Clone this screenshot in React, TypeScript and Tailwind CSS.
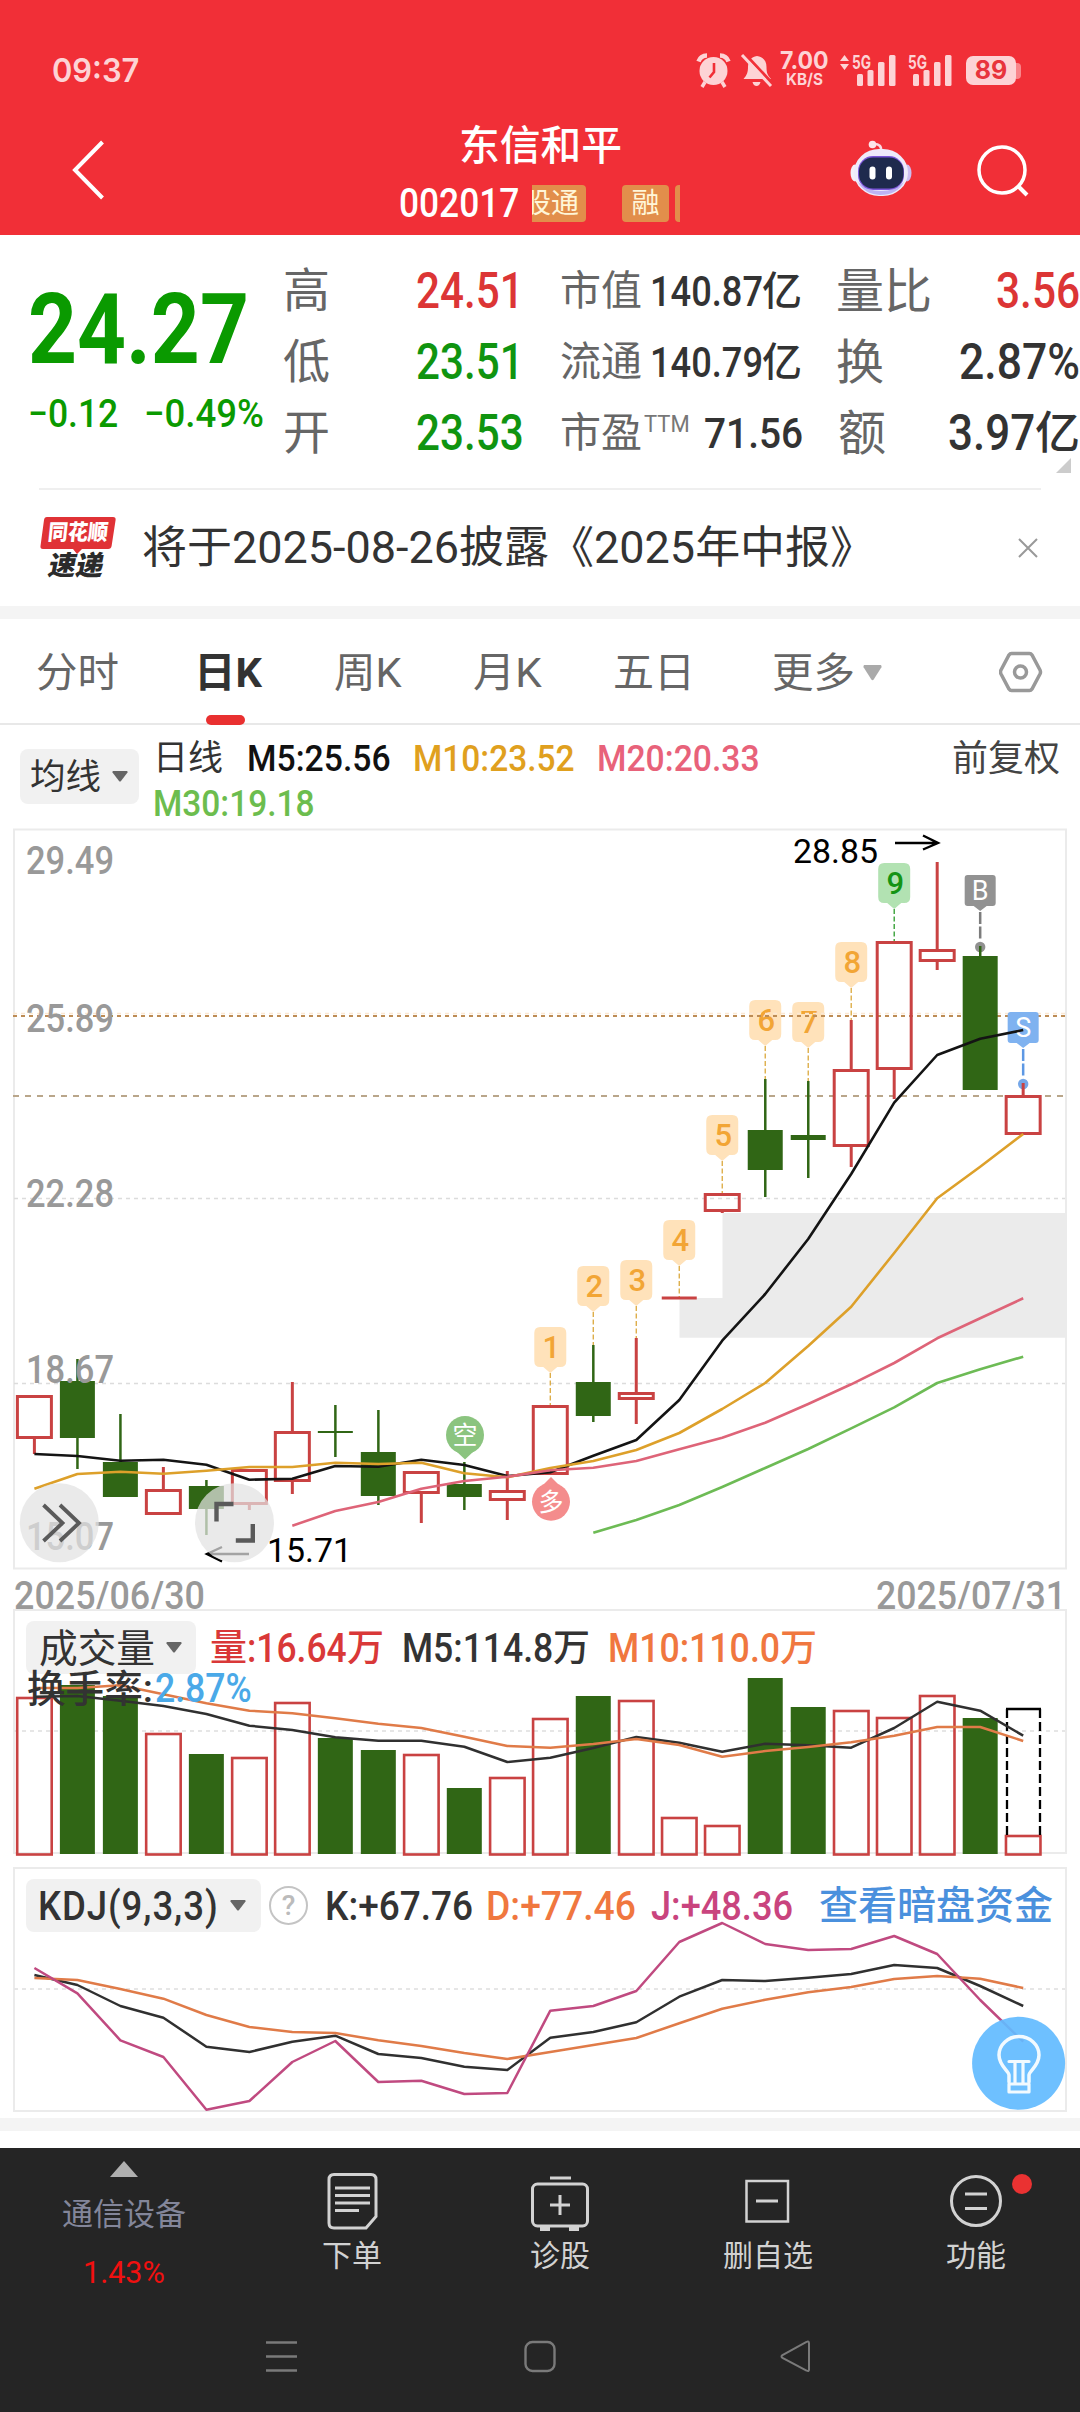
import { useLayoutEffect, useRef, type ReactNode } from "react";

/** One line of text, squeezed or stretched horizontally to the width of its box. */
function Fit({ className, children }: { className: string; children: ReactNode }) {
  const box = useRef<HTMLSpanElement>(null);
  const text = useRef<HTMLSpanElement>(null);
  useLayoutEffect(() => {
    if (!box.current || !text.current) return;
    text.current.style.transform = "none";
    const k = box.current.clientWidth / text.current.offsetWidth;
    text.current.style.transform = `scaleX(${k})`;
  });
  return (
    <span ref={box} className={"block shrink-0 overflow-visible whitespace-nowrap " + className}>
      <span ref={text} className="inline-block origin-left">{children}</span>
    </span>
  );
}

/* ---------- data ---------- */

const cx = (i: number) => 34.4 + i * 42.99;
const pts = (ys: number[], from = 0) => ys.map((y, k) => `${cx(from + k).toFixed(1)},${y}`).join(" ");

type Candle = { up: boolean; t: number; b: number; h?: number; l?: number };
const candles: Candle[] = [
  { up: true, t: 1395, b: 1439, l: 1454 },
  { up: false, t: 1381, b: 1438, h: 1359, l: 1469 },
  { up: false, t: 1462, b: 1497, h: 1414 },
  { up: true, t: 1489, b: 1515, h: 1467 },
  { up: false, t: 1486, b: 1509, h: 1480, l: 1535 },
  { up: true, t: 1469, b: 1505, l: 1510 },
  { up: true, t: 1431, b: 1482, h: 1382, l: 1494 },
  { up: false, t: 1431, b: 1433, h: 1405, l: 1457 },
  { up: false, t: 1452, b: 1496, h: 1410, l: 1505 },
  { up: true, t: 1471, b: 1494, l: 1523 },
  { up: false, t: 1484, b: 1497, h: 1462, l: 1510 },
  { up: true, t: 1490, b: 1501, h: 1471, l: 1520 },
  { up: true, t: 1405, b: 1475 },
  { up: false, t: 1382, b: 1416, h: 1345, l: 1422 },
  { up: true, t: 1392, b: 1400, h: 1338, l: 1424 },
  { up: true, t: 1296.5, b: 1299.5 },
  { up: true, t: 1193, b: 1212, l: 1213 },
  { up: false, t: 1130, b: 1170, h: 1079, l: 1197 },
  { up: false, t: 1135, b: 1140, h: 1081, l: 1178 },
  { up: true, t: 1069, b: 1147, h: 1020, l: 1167 },
  { up: true, t: 941, b: 1070, l: 1099 },
  { up: true, t: 949, b: 962, h: 862, l: 970 },
  { up: false, t: 956, b: 1090, h: 946 },
  { up: true, t: 1095, b: 1135, h: 1083 },
];

const ma5 = [1454, 1456, 1460.7, 1459.7, 1464.7, 1479.7, 1478.7, 1466, 1466.7, 1459.7, 1465, 1476, 1472.3, 1455.7, 1440, 1400, 1340.7, 1294, 1239, 1174, 1102.7, 1055, 1038.7, 1030];
const ma10 = [1488.7, 1474, 1471.7, 1473.7, 1470.7, 1467, 1467, 1462.7, 1464, 1462.7, 1473.3, 1477.3, 1468, 1461, 1450, 1433, 1409, 1383, 1346, 1306.7, 1253, 1198.3, 1166.7, 1134];
const ma20 = [1525.7, 1511, 1502, 1488.7, 1481, 1476.7, 1470.3, 1467.7, 1461, 1449.3, 1437.7, 1422.7, 1404, 1384.3, 1363, 1338.3, 1318.3, 1298.3];
const ma30 = [1532.7, 1520, 1505, 1487, 1468, 1449, 1428.3, 1407.3, 1383, 1369.3, 1356.7];

const volTop = [1697, 1685, 1696, 1733, 1754, 1757, 1702, 1738, 1750, 1754, 1788, 1777, 1718, 1696, 1700, 1817, 1825, 1678, 1707, 1710, 1717, 1695, 1718, 1835];
const vol5 = [1696.7, 1696, 1700.7, 1706, 1714, 1725.7, 1730, 1737.3, 1740.7, 1740.7, 1746.7, 1762, 1757.7, 1748, 1737, 1742.7, 1751.7, 1743.7, 1745.3, 1747.7, 1728, 1701.7, 1710.7, 1735.7];
const vol10 = [1688, 1688, 1685.3, 1694.3, 1703.3, 1710.7, 1713.3, 1718.3, 1723.7, 1728, 1736.7, 1746, 1747.7, 1744, 1739, 1745, 1756.7, 1751, 1747, 1742.3, 1735.7, 1727, 1727, 1741];

const kLine = [1975, 1985, 2006, 2017.7, 2046.7, 2052, 2041.7, 2035.7, 2054, 2058, 2066.7, 2070, 2037.7, 2032, 2022.3, 1996.7, 1980, 1981, 1977.7, 1974, 1965, 1968, 1986, 2006];
const dLine = [1978, 1980, 1989, 1998.7, 2015, 2027, 2032, 2033, 2040.3, 2046, 2053, 2059, 2052, 2045, 2038, 2023.3, 2008.7, 1999.7, 1992.3, 1987, 1979, 1976, 1978.7, 1988];
const jLine = [1968, 1993.3, 2040.3, 2057, 2109.7, 2101, 2062, 2041, 2082, 2080.7, 2094, 2093, 2010.7, 2006, 1991, 1942, 1923, 1944, 1950, 1949, 1936, 1954, 2000, 2041.7];

const tags: [string, number, number][] = [
  ["1", 12, 1327],
  ["2", 13, 1266],
  ["3", 14, 1260],
  ["4", 15, 1220],
  ["5", 16, 1115],
  ["6", 17, 1000],
  ["7", 18, 1002],
  ["8", 19, 942],
  ["9", 20, 863],
];

const axis: [string, number][] = [
  ["29.49", 874],
  ["25.89", 1032],
  ["22.28", 1207],
  ["18.67", 1383],
  ["15.07", 1550],
];

const RED = "#c94242";
const GREEN = "#306615";

/* ---------- header ---------- */

function Signal() {
  return (
    <svg width="46" height="36" viewBox="0 0 46 36" fill="#fdd3d5">
      <text x="1" y="16.5" fontSize="19" fontWeight="700" textLength="19" lengthAdjust="spacingAndGlyphs">5G</text>
      <rect x="6" y="22" width="6" height="12" rx="1.5" />
      <rect x="16.5" y="18" width="6" height="16" rx="1.5" />
      <rect x="27" y="10" width="6.5" height="24" rx="1.5" />
      <rect x="38" y="3" width="6.5" height="31" rx="1.5" />
    </svg>
  );
}

function StatusBar() {
  return (
    <div className="flex h-[88px] items-end pl-[52px] font-['Inter','Roboto',sans-serif] text-[#fdd3d5]">
      <Fit className="mb-[-2px] w-[87px] text-[33px] leading-[40px] font-semibold">09:37</Fit>
      <svg className="ml-[557px]" width="35" height="36" viewBox="0 0 35 36">
        <circle cx="17.5" cy="19" r="14" fill="#fdd3d5" />
        <path d="M2.500 9.500A9 9 0 0 1 11 3.500M24 3.500a9 9 0 0 1 8.500 6" fill="none" stroke="#fdd3d5" strokeWidth="4.500" />
        <path d="M9 30l-3 5M26 30l3 5" stroke="#fdd3d5" strokeWidth="3.500" />
        <path d="M18 11v9l-4.500 5.500" fill="none" stroke="#f12f37" strokeWidth="2.600" />
      </svg>
      <svg className="ml-[9px]" width="34" height="36" viewBox="0 0 34 36">
        <path d="M17 4c6.500 1 9.500 5 9.500 11 0 6 1 8 4.500 12H3.500C7 23 8 20 8 15c0-6 3-10 9-11z" fill="#fdd3d5" />
        <path d="M12.500 30h8q-1 4-4 4t-4-4z" fill="#fdd3d5" />
        <path d="M3.500 0.500l29 31" stroke="#f12f37" strokeWidth="3" />
        <path d="M2 3l29 31" stroke="#fdd3d5" strokeWidth="3" />
      </svg>
      <div className="ml-[6px] flex h-[38px] flex-col items-center">
        <Fit className="w-[49px] text-[24px] leading-[21px] font-bold">7.00</Fit>
        <Fit className="w-[37px] text-[16.5px] leading-[16px] font-bold">KB/S</Fit>
      </div>
      <svg className="ml-[10px]" width="11" height="36" viewBox="0 0 11 36" fill="#fdd3d5">
        <path d="M1 9l4.500-6L10 9zM1 12l4.500 6L10 12z" />
      </svg>
      <span className="ml-px"><Signal /></span>
      <span className="ml-[10px]"><Signal /></span>
      <div className="mb-[3px] ml-[13px] flex items-center">
        <div className="flex h-[29px] w-[50px] items-center justify-center rounded-[7px] bg-[#fdd3d5] text-[25px] leading-none font-bold text-[#e8343c]">89</div>
        <div className="h-[16px] w-[5px] rounded-r-[4px] bg-[#f9868b]" />
      </div>
    </div>
  );
}

function Robot() {
  return (
    <svg width="62" height="58" viewBox="0 0 62 58">
      <path d="M31 11q1-7-7-7" fill="none" stroke="#fbd9e2" strokeWidth="2.500" />
      <circle cx="22.500" cy="4.500" r="3.800" fill="#fde6ea" />
      <ellipse cx="5" cy="33" rx="4.500" ry="8.500" fill="#f3eef9" />
      <ellipse cx="57" cy="33" rx="4.500" ry="8.500" fill="#cdbdf0" />
      <rect x="4" y="9" width="54" height="47" rx="25" fill="#eeeafa" />
      <path d="M8 42q6 12 22 13 17 0 24-13-9 9-23 9T8 42z" fill="#bdb3f4" />
      <rect x="8" y="16" width="46" height="34" rx="15" fill="#7a55d8" />
      <rect x="9" y="17.500" width="44.500" height="31" rx="14" fill="#1e2a4d" />
      <rect x="19.500" y="26.500" width="6" height="13" rx="3" fill="#fff" />
      <rect x="36" y="26.500" width="6" height="13" rx="3" fill="#fff" />
    </svg>
  );
}

function Header() {
  return (
    <header className="h-[235px] bg-[#f12f37] text-white">
      <StatusBar />
      <div className="flex h-[147px]">
        <svg className="mt-[50px] ml-[70px]" width="36" height="64" viewBox="0 0 36 64">
          <path d="M32.500 4L5 32l27.500 28" fill="none" stroke="#fff" strokeWidth="4" />
        </svg>
        <div className="ml-[292px] flex w-[284px] flex-col items-center">
          <Fit className="mt-[34px] w-[163px] text-[41px] leading-[48px] font-medium">东信和平</Fit>
          <div className="mt-[14px] flex h-[38px] w-full items-center">
            <Fit className="mt-px ml-px w-[120px] text-[40px] leading-[38px] font-medium">002017</Fit>
            <div className="ml-[13px] flex h-[37px] w-[148px] shrink-0 justify-end gap-[6px] overflow-hidden text-[28px] leading-[35px] text-[#fff6d8]">
              <div className="mr-[30px] flex w-[70px] shrink-0 items-center justify-center rounded-[4px] bg-[#e28e4b]">股通</div>
              <div className="flex w-[47px] shrink-0 items-center justify-center rounded-[4px] bg-[#e28e4b]">融</div>
              <div className="w-[5px] shrink-0 rounded-l-[4px] bg-[#e28e4b]" />
            </div>
          </div>
        </div>
        <div className="mt-[52px] ml-[168px]"><Robot /></div>
        <svg className="mt-[54px] ml-[64px]" width="56" height="58" viewBox="0 0 56 58">
          <circle cx="26" cy="28" r="23" fill="none" stroke="#fff" strokeWidth="3.500" />
          <path d="M42 44l9 9" stroke="#fff" strokeWidth="4" />
        </svg>
      </div>
    </header>
  );
}

/* ---------- quote ---------- */

function Yi({ size }: { size: "s" | "l" }) {
  return size === "s" ? <span className="-ml-px w-[41px] text-[40px] font-medium">亿</span> : <span className="w-[45px] text-[45px] font-medium">亿</span>;
}

function Quote() {
  const big = "text-[50px] leading-[71px] font-medium";
  return (
    <section className="flex h-[253px] bg-white">
      <div className="ml-[28px] w-[255px] text-[#0a9a00]">
        <Fit className="mt-[45px] w-[221px] text-[99px] leading-[98px] font-bold">24.27</Fit>
        <div className="mt-[16px] flex gap-[26px] text-[39px] leading-[40px] font-medium">
          <Fit className="w-[90px]">−0.12</Fit>
          <Fit className="w-[120px]">−0.49%</Fit>
        </div>
      </div>
      <div className="relative mt-[21px] grow text-[#333]">
        <div className="flex h-[71px] items-center">
          <span className="w-[133px] text-[47px] text-[#666]">高</span>
          <Fit className={"w-[108px] text-[#dc3535] " + big}>24.51</Fit>
          <span className="ml-[36px] w-[90px] text-[41px] text-[#666]">市值</span>
          <Fit className="w-[113px] text-[42px] font-medium">140.87</Fit>
          <Yi size="s" />
          <span className="ml-[33px] text-[48px] text-[#666]">量比</span>
          <span className="grow" />
          <Fit className={"w-[84px] text-[#dc3535] " + big}>3.56</Fit>
        </div>
        <div className="flex h-[71px] items-center">
          <span className="w-[133px] text-[47px] text-[#666]">低</span>
          <Fit className={"w-[108px] text-[#109410] " + big}>23.51</Fit>
          <span className="ml-[36px] w-[90px] text-[41px] text-[#666]">流通</span>
          <Fit className="w-[113px] text-[42px] font-medium">140.79</Fit>
          <Yi size="s" />
          <span className="ml-[33px] text-[48px] text-[#666]">换</span>
          <span className="grow" />
          <Fit className={"w-[121px] " + big}>2.87%</Fit>
        </div>
        <div className="flex h-[71px] items-center">
          <span className="w-[133px] text-[47px] text-[#666]">开</span>
          <Fit className={"w-[108px] text-[#109410] " + big}>23.53</Fit>
          <span className="ml-[36px] text-[41px] text-[#666]">市盈</span>
          <Fit className="mt-[-16px] ml-[2px] w-[46px] text-[23px] text-[#777]">TTM</Fit>
          <Fit className="ml-[14px] w-[99px] text-[42px] font-medium">71.56</Fit>
          <span className="ml-[35px] text-[48px] text-[#666]">额</span>
          <span className="grow" />
          <Fit className={"w-[87px] " + big}>3.97</Fit>
          <Yi size="l" />
        </div>
        <svg className="absolute top-[202px] right-[9px]" width="15" height="15"><path d="M15 0v15H0z" fill="#ccc" /></svg>
      </div>
    </section>
  );
}

function News() {
  return (
    <section className="bg-white">
      <div className="mx-[39px] flex h-[118px] items-center border-t-2 border-[#efefef]">
        <div className="relative flex h-[64px] w-[77px] flex-col items-center">
          <svg className="absolute inset-0" width="77" height="64" viewBox="0 0 77 64">
            <path d="M8 1h66q3 0 2.600 3l-4 26q-.5 3-3.500 3H43l-5 5-4-5H4q-3 0-2.500-3L5 4q.4-3 3-3z" fill="#e03236" />
          </svg>
          <Fit className="relative mt-[3px] w-[60px] -skew-x-6 text-[22px] leading-[27px] font-black text-white">同花顺</Fit>
          <Fit className="relative mt-[7px] mr-[2px] w-[55px] -skew-x-12 text-[27px] leading-[26px] font-black text-[#2b2b2b]">速递</Fit>
        </div>
        <Fit className="ml-[26px] w-[733px] text-[44px] leading-[60px] text-[#333]">将于2025-08-26披露《2025年中报》</Fit>
        <svg className="ml-auto mr-[3px]" width="20" height="20"><path d="M1 1l18 18M19 1L1 19" stroke="#999" strokeWidth="2" /></svg>
      </div>
      <div className="h-[13px] bg-[#f4f4f4]" />
    </section>
  );
}

/* ---------- tabs and averages ---------- */

function Down({ className, w = 16, h = 11, fill = "#666" }: { className?: string; w?: number; h?: number; fill?: string }) {
  return (
    <svg className={"shrink-0 " + (className ?? "")} width={w} height={h} viewBox="0 0 16 11" preserveAspectRatio="none">
      <path d="M1 0h14q1 .5.500 1.500L9 10q-1 1-2 0L.5 1.500Q0 .5 1 0z" fill={fill} />
    </svg>
  );
}

function Tabs() {
  return (
    <nav className="flex h-[106px] items-center border-b-2 border-[#e8e8e8] bg-white pt-[3px] pl-[36px] text-[41px] leading-[60px] text-[#666]">
      <Fit className="w-[83px]">分时</Fit>
      <div className="relative ml-[75px]">
        <Fit className="w-[68px] font-bold text-[#333]">日K</Fit>
        <div className="absolute top-[72px] left-[12px] h-[10px] w-[39px] rounded-[5px] bg-[#e93030]" />
      </div>
      <Fit className="ml-[72px] w-[68px]">周K</Fit>
      <Fit className="ml-[71px] w-[69px]">月K</Fit>
      <Fit className="ml-[71px] w-[82px]">五日</Fit>
      <Fit className="ml-[77px] w-[83px]">更多</Fit>
      <Down className="ml-[8px]" w={19} h={16} fill="#aaa" />
      <svg className="mt-[-2px] ml-[117px]" width="44" height="42" viewBox="0 0 44 42" fill="none" stroke="#999" strokeWidth="3.500">
        <path d="M12.500 2.500h18q1.500 0 2.500 1.500l8 15q1 2 0 4l-8 15q-1 1.500-2.500 1.500h-18q-1.500 0-2.500-1.500l-8-15q-1-2 0-4l8-15q1-1.500 2.500-1.500z" />
        <circle cx="21.500" cy="21" r="6" />
      </svg>
    </nav>
  );
}

function Averages() {
  return (
    <section className="flex h-[103px] bg-white pl-[20px] text-[37px] font-medium">
      <div className="mt-[24px] flex h-[55px] w-[119px] items-center rounded-[8px] bg-[#f1f1f1] pl-[10px] font-normal text-[#333]">
        <Fit className="mt-[4px] w-[71px] text-[35px]">均线</Fit>
        <Down className="ml-[11px]" />
      </div>
      <div className="ml-[14px] w-[780px] leading-[45px]">
        <div className="mt-[11px] flex">
          <Fit className="w-[70px] text-[35px] font-normal text-[#333]">日线</Fit>
          <Fit className="ml-[24px] w-[144px] text-[#111]">M5:25.56</Fit>
          <Fit className="ml-[22px] w-[162px] text-[#e0a01e]">M10:23.52</Fit>
          <Fit className="ml-[22px] w-[163px] text-[#e8627a]">M20:20.33</Fit>
        </div>
        <Fit className="w-[162px] text-[#6cbd4e]">M30:19.18</Fit>
      </div>
      <Fit className="mt-[12px] ml-[19px] w-[108px] text-[36px] leading-[45px] font-normal text-[#444]">前复权</Fit>
    </section>
  );
}

/* ---------- charts ---------- */

function Tag({ label, i, top }: { label: string; i: number; top: number }) {
  const x = cx(i);
  const nine = label === "9";
  return (
    <g>
      <path
        d={`M${x - 10} ${top}h20q6 0 6 6v28q0 6-6 6h-3l-7 6-7-6h-3q-6 0-6-6v-28q0-6 6-6z`}
        fill={nine ? "#b2e2b2" : "#ffe2ba"}
      />
      <line x1={x} x2={x} y1={top + 46} y2={top + 79} stroke={nine ? "#2a9a2a" : "#dba83c"} strokeWidth="1.300" strokeDasharray="5 2.500" />
      <text x={x + 1} y={top + 30.500} fontSize="31" fontWeight="500" textAnchor="middle" fill={nine ? "#149414" : "#f2a535"}>{label}</text>
    </g>
  );
}

function Flag({ label, i, top, fill, line }: { label: string; i: number; top: number; fill: string; line: string }) {
  const x = cx(i);
  return (
    <g>
      <path d={`M${x - 12.500} ${top}h25q3 0 3 3v25q0 3-3 3h-6l-6.500 5-6.500-5h-6q-3 0-3-3v-25q0-3 3-3z`} fill={fill} />
      <line x1={x} x2={x} y1={top + 37} y2={top + 65} stroke={line} strokeWidth="2.500" strokeDasharray="12 2.500" />
      <circle cx={x} cy={top + 72} r="5.200" fill={line} opacity=".85" />
      <text x={x} y={top + 25} fontSize="27" textAnchor="middle" fill="#fff">{label}</text>
    </g>
  );
}

function CandleChart() {
  return (
    <svg className="relative block overflow-visible" width="1080" height="781" viewBox="0 828 1080 781">
      <rect x="14" y="829.500" width="1052" height="739" fill="none" stroke="#ebebeb" strokeWidth="2" />
      <path d="M722.500 1213H1065v124.700H679.500V1298h43z" fill="#ebebeb" />
      <g stroke="#dcdcdc" strokeWidth="1.300" strokeDasharray="4 4">
        <line x1="14" x2="1065" y1="1198.500" y2="1198.500" />
        <line x1="14" x2="1065" y1="1383.500" y2="1383.500" />
      </g>
      {tags.map(([label, i, top]) => <Tag key={label} label={label} i={i} top={top} />)}
      <line x1="13" x2="1065" y1="1013.500" y2="1013.500" stroke="#fbe8d2" strokeWidth="1.500" strokeDasharray="4 4" />
      <line x1="13" x2="1065" y1="1016" y2="1016" stroke="#bd8c55" strokeWidth="2" strokeDasharray="4 4" />
      <line x1="13" x2="1065" y1="1096" y2="1096" stroke="#b9a68a" strokeWidth="2" strokeDasharray="6 6" />
      <Flag label="B" i={22} top={875} fill="#929292" line="#7c7c7c" />
      <Flag label="S" i={23} top={1012} fill="#7fb2f0" line="#5d98e4" />

      {candles.map((c, i) => {
        const x = cx(i);
        if (c.up) {
          return (
            <g key={i} stroke={RED} strokeWidth="3" fill="none">
              {c.h && <line x1={x} x2={x} y1={c.h} y2={c.t} />}
              {c.l && <line x1={x} x2={x} y1={c.b} y2={c.l} />}
              {c.b - c.t < 4
                ? <line x1={x - 17.500} x2={x + 17.500} y1={(c.t + c.b) / 2} y2={(c.t + c.b) / 2} />
                : <rect x={x - 17} y={c.t + 1.500} width="34" height={c.b - c.t - 3} />}
            </g>
          );
        }
        return (
          <g key={i} fill={GREEN}>
            <rect x={x - 1.200} y={c.h ?? c.t} width="2.500" height={(c.l ?? c.b) - (c.h ?? c.t)} />
            <rect x={x - 17.500} y={c.t} width="35" height={c.b - c.t} />
          </g>
        );
      })}

      <g fill="none" strokeWidth="2.600" strokeLinejoin="round">
        <polyline points={pts(ma5)} stroke="#141414" />
        <polyline points={pts(ma10)} stroke="#dda02a" />
        <polyline points={pts(ma20, 6)} stroke="#de6478" />
        <polyline points={pts(ma30, 13)} stroke="#6dbb55" />
      </g>

      {axis.map(([t, y]) => (
        <text key={t} x="26" y={y} fontSize="39.500" fontWeight="500" fill="#999" textLength="88" lengthAdjust="spacingAndGlyphs">{t}</text>
      ))}

      <path d="M456 1451l9 8.500 9-8.500z" fill="#8bc47f" />
      <circle cx="465" cy="1435" r="19" fill="#8bc47f" />
      <text x="465" y="1444" fontSize="25" textAnchor="middle" fill="#fff">空</text>
      <path d="M542 1486l9-9 9 9z" fill="#f48c8c" />
      <circle cx="551" cy="1501.700" r="19" fill="#f48c8c" />
      <text x="551" y="1511" fontSize="25" textAnchor="middle" fill="#fff">多</text>

      <g fill="none" stroke="#000" strokeWidth="2.400">
        <path d="M895 843h42M923 835.500l15 7.500-15 6.500" />
        <path d="M249 1554h-42M222 1547l-15 7 15 7.500" />
      </g>
      <text x="793" y="863" fontSize="34" textLength="85" lengthAdjust="spacingAndGlyphs">28.85</text>
      <text x="267" y="1561.500" fontSize="34" textLength="85" lengthAdjust="spacingAndGlyphs">15.71</text>

      <circle cx="59.300" cy="1522.700" r="39.500" fill="#e2e2e2" fillOpacity=".72" />
      <circle cx="234.500" cy="1522.700" r="39.500" fill="#e2e2e2" fillOpacity=".72" />
      <g fill="none" stroke="#5a5a5a" strokeWidth="3.800">
        <path d="M43.500 1505l19 18-19 18M60 1505l19 18-19 18" />
        <path d="M233.500 1504h-17v17.500M252.800 1524v16.500h-17" strokeWidth="4.400" />
      </g>

      <g fontSize="39" fontWeight="500" fill="#999">
        <text x="14" y="1609" textLength="191" lengthAdjust="spacingAndGlyphs">2025/06/30</text>
        <text x="876" y="1609" textLength="190" lengthAdjust="spacingAndGlyphs">2025/07/31</text>
      </g>
    </svg>
  );
}

function VolumePanel() {
  return (
    <section className="relative h-[258px]">
      <svg className="absolute inset-0" width="1080" height="258" viewBox="0 1609 1080 258">
        <rect x="14" y="1610" width="1052" height="243" fill="none" stroke="#ebebeb" strokeWidth="2" />
        <line x1="14" x2="1065" y1="1731" y2="1731" stroke="#e6e6e6" strokeWidth="1.800" strokeDasharray="4 4" />
        {volTop.map((t, i) =>
          candles[i].up ? (
            <rect key={i} x={cx(i) - 17.200} y={t + 1} width="34.500" height={1854 - t - 0.500} fill="none" stroke={RED} strokeWidth="2.600" />
          ) : (
            <rect key={i} x={cx(i) - 17.500} y={t} width="35" height={1854 - t} fill={GREEN} />
          ),
        )}
        <path d="M1007 1835v-126M1040 1835v-126" stroke="#000" strokeWidth="2.300" strokeDasharray="9 4" />
        <path d="M1006 1709h35" stroke="#000" strokeWidth="2.300" />
        <g fill="none" strokeWidth="2.500" strokeLinejoin="round">
          <polyline points={pts(vol5)} stroke="#303030" />
          <polyline points={pts(vol10)} stroke="#e07b48" />
        </g>
      </svg>
      <div className="relative flex h-[65px] pt-[12px] pl-[26px] text-[40px] leading-[55px] font-medium text-[#333]">
        <div className="flex h-[53px] w-[170px] items-center rounded-[8px] bg-[#f1f1f1] pl-[13px] font-normal">
          <Fit className="mt-[3px] w-[116px] text-[39px]">成交量</Fit>
          <Down className="ml-[11px]" />
        </div>
        <div className="ml-[14px] flex text-[#d93838]">
          <span className="text-[37px]">量</span>
          <Fit className="w-[100px]">:16.64</Fit>
          <span className="text-[37px]">万</span>
        </div>
        <div className="ml-[18px] flex">
          <Fit className="w-[151px]">M5:114.8</Fit>
          <span className="text-[37px]">万</span>
        </div>
        <div className="ml-[18px] flex text-[#f0773f]">
          <Fit className="w-[172px]">M10:110.0</Fit>
          <span className="text-[37px]">万</span>
        </div>
      </div>
      <div className="relative mt-[-5px] flex pl-[27px] text-[40px] leading-[40px] font-medium text-[#333]">
        <Fit className="w-[126px] text-[38px]">换手率:</Fit>
        <Fit className="ml-[2px] w-[97px] text-[#4aa9e8]">2.87%</Fit>
      </div>
    </section>
  );
}

function KdjPanel() {
  return (
    <section className="relative h-[251px]">
      <svg className="absolute inset-0" width="1080" height="251" viewBox="0 1867 1080 251">
        <rect x="14" y="1868" width="1052" height="243" fill="none" stroke="#ebebeb" strokeWidth="2" />
        <line x1="14" x2="1065" y1="1989" y2="1989" stroke="#e6e6e6" strokeWidth="1.800" strokeDasharray="4 4" />
        <g fill="none" strokeWidth="2.500" strokeLinejoin="round">
          <polyline points={pts(kLine)} stroke="#303030" />
          <polyline points={pts(dLine)} stroke="#e07b48" />
          <polyline points={pts(jLine)} stroke="#c04a80" />
        </g>
        <circle cx="1018.600" cy="2063.300" r="46.500" fill="#62bbff" fillOpacity=".92" />
        <g fill="none" stroke="#f2faff" strokeWidth="3.500" strokeLinejoin="round" strokeLinecap="round">
          <path d="M1009 2082v-7c0-4-10-9-10-20a20 18.500 0 0 1 40 0c0 11-10 16-10 20v7" />
          <path d="M1009 2084h20v8h-20zM1009 2061.500h20M1015 2063v20M1023 2063v20" strokeWidth="3.200" />
        </g>
      </svg>
      <div className="relative flex pt-[12px] pl-[26px] text-[40px] leading-[55px] font-medium">
        <div className="flex h-[53px] w-[235px] items-center rounded-[8px] bg-[#f1f1f1] pl-[12px] text-[#333]">
          <Fit className="mt-[2px] w-[181px] tracking-[1px]">KDJ(9,3,3)</Fit>
          <Down className="ml-[11px]" />
        </div>
        <div className="mt-[7px] ml-[8px] flex size-[39px] items-center justify-center rounded-full border-[2.5px] border-[#c4c4c4] text-[28px] leading-none font-medium text-[#bbb]">?</div>
        <Fit className="ml-[17px] w-[148px] text-[#333]">K:+67.76</Fit>
        <Fit className="ml-[13px] w-[150px] text-[#f0773f]">D:+77.46</Fit>
        <Fit className="ml-[15px] w-[142px] text-[#c9447e]">J:+48.36</Fit>
        <Fit className="ml-[26px] w-[234px] text-[39px] text-[#4a90dd]">查看暗盘资金</Fit>
      </div>
    </section>
  );
}

/* ---------- bottom ---------- */

function NavItem({ label, dot, children }: { label: string; dot?: boolean; children: ReactNode }) {
  return (
    <div className="relative flex w-[208px] flex-col items-center pt-[24px] text-[30px] leading-[42px] text-[#d2d2d2]">
      <svg width="60" height="60" viewBox="0 0 60 60" fill="none" stroke="#d2d2d2" strokeWidth="3">{children}</svg>
      <span className="mt-[3px]">{label}</span>
      {dot && <span className="absolute top-[26px] left-[140px] size-[20px] rounded-full bg-[#ea3232]" />}
    </div>
  );
}

function BottomBar() {
  return (
    <footer className="h-[264px] bg-[#252525]">
      <div className="flex h-[160px]">
        <div className="flex w-[248px] flex-col items-center">
          <svg className="mt-[13px]" width="28" height="16"><path d="M14 0l14 16H0z" fill="#b0b0b0" /></svg>
          <span className="mt-[17px] text-[31px] leading-[42px] text-[#83869a]">通信设备</span>
          <Fit className="mt-[15px] w-[82px] text-[32px] leading-[42px] text-[#f01010]">1.43%</Fit>
        </div>
        <NavItem label="下单">
          <path d="M12 2.500h37q5 0 5 5v37L44 56H12q-5 0-5-5V7.500q0-5 5-5z" />
          <path d="M13 16h35M13 23.500h35M13 31h35M13 38.500h24" />
        </NavItem>
        <NavItem label="诊股">
          <rect x="2.500" y="12" width="55" height="42" rx="5" />
          <path d="M20 6h21M30 23v20M20 33h20" />
          <path d="M10 57h10M39 57h10" strokeWidth="4" />
        </NavItem>
        <NavItem label="删自选">
          <rect x="8.500" y="9" width="41.500" height="40.500" strokeWidth="2.500" />
          <path d="M18 29h22" />
        </NavItem>
        <NavItem label="功能" dot>
          <circle cx="30" cy="29" r="24.500" />
          <path d="M19 22h22M19 36.500h22" />
        </NavItem>
      </div>
      <svg className="block" width="1080" height="104" viewBox="0 2308 1080 104" fill="none" stroke="#7a7a7a" strokeWidth="2.400">
        <path d="M266 2342.500h31M266 2356.500h31M266 2370.500h31" />
        <rect x="525.500" y="2342" width="29" height="29" rx="7" />
        <path d="M809 2343.500v26q0 2.500-2.500 1l-24-12.500q-2-1.500 0-3l24-13q2.500-1.500 2.500 1.500z" strokeWidth="2" />
      </svg>
    </footer>
  );
}

export default function App() {
  return (
    <div className="w-[1080px] overflow-hidden bg-white font-['Roboto','Noto_Sans_CJK_SC',sans-serif]">
      <Header />
      <Quote />
      <News />
      <Tabs />
      <Averages />
      <CandleChart />
      <VolumePanel />
      <KdjPanel />
      <div className="h-[13px] bg-[#f4f4f4]" />
      <div className="h-[17px] bg-white" />
      <BottomBar />
    </div>
  );
}
